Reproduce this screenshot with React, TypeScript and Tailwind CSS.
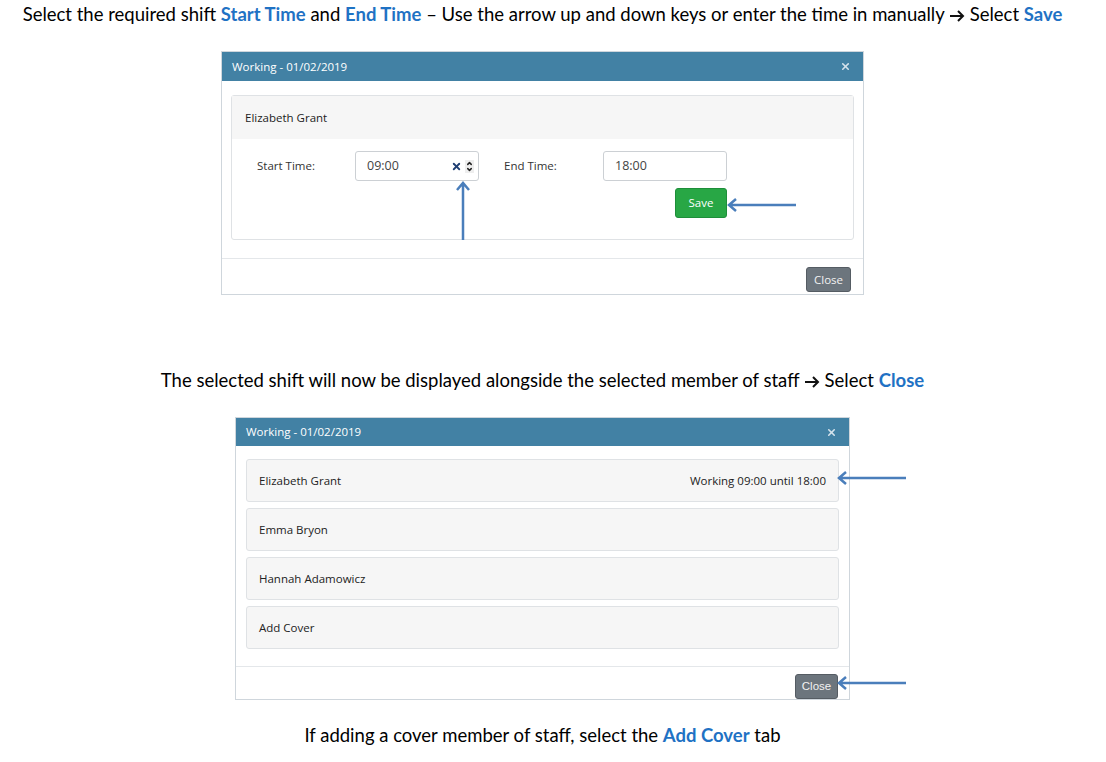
import { X, ChevronUp, ChevronDown } from 'lucide-react';

const doc = { fontFamily: 'Lato, "Liberation Sans", sans-serif' };
const ui = { fontFamily: '"Open Sans", "Noto Sans", sans-serif' };

function Arrow({ dir }: { dir: 'left' | 'up' }) {
  if (dir === 'up') {
    return (
      <svg width="14" height="60" viewBox="0 0 14 60" className="block">
        <path d="M7 59 V2 M1 9 L7 2 L13 9" stroke="#4a7ebb" strokeWidth="2.5" fill="none" strokeLinejoin="miter" />
      </svg>
    );
  }
  return (
    <svg width="70" height="14" viewBox="0 0 70 14" className="block">
      <path d="M69 7 H2 M9 1 L2 7 L9 13" stroke="#4a7ebb" strokeWidth="2.5" fill="none" />
    </svg>
  );
}

function Pointer() {
  return (
    <svg width="16" height="12" viewBox="0 0 16 12" className="inline-block align-[-1px]">
      <path d="M1 6 H14 M9 1 L14 6 L9 11" stroke="#111" strokeWidth="2" fill="none" />
    </svg>
  );
}

function ModalHeader() {
  return (
    <div className="flex items-center justify-between bg-[#4281a4] pl-[10px] pr-[12px] text-[11.5px] text-white">
      <span>Working - 01/02/2019</span>
      <X size={11} strokeWidth={3.5} className="text-[#d5e3ec]" />
    </div>
  );
}

function EditModal() {
  return (
    <div className="relative w-[643px] border border-[#cfd6dc] bg-white" style={ui}>
      <div className="h-[29px] flex flex-col justify-center bg-[#4281a4]">
        <ModalHeader />
      </div>
      <div className="px-[9px] pt-[14px] pb-[18px]">
        <div className="rounded-[3px] border border-[#dfe2e5]">
          <div className="h-[43px] flex items-center bg-[#f6f6f6] pl-[13px] text-[11.5px] text-[#222]">Elizabeth Grant</div>
          <div className="pt-[12px] pb-[21px]">
            <div className="flex items-center text-[11.5px] text-[#333]">
              <span className="pl-[25px] w-[123px]">Start Time:</span>
              <div className="flex h-[30px] w-[124px] items-center rounded-[3px] border border-[#ccd0d4] pl-[11px] pr-[4px] text-[12.5px] text-[#444]">
                <span className="flex-1">09:00</span>
                <X size={11} strokeWidth={4} className="text-[#1f3f73]" />
                <div className="ml-[3px] flex flex-col items-center bg-[#eee] px-[1px]">
                  <ChevronUp size={7} strokeWidth={5} className="text-[#222] -mb-[1px]" />
                  <ChevronDown size={7} strokeWidth={5} className="text-[#222]" />
                </div>
              </div>
              <span className="pl-[25px] w-[124px]">End Time:</span>
              <div className="flex h-[30px] w-[124px] items-center rounded-[3px] border border-[#ccd0d4] pl-[11px] text-[12.5px] text-[#444]">
                18:00
              </div>
            </div>
            <div className="flex pl-[443px] pt-[7px]">
              <button className="h-[30px] w-[52px] rounded-[3px] border border-[#1e8e3a] bg-[#28a745] text-[11.5px] text-white">Save</button>
            </div>
          </div>
        </div>
      </div>
      <div className="flex justify-end border-t border-[#e4e7ea] px-[12px] pt-[8px] pb-[2px]">
        <button className="h-[25px] w-[45px] rounded-[3px] border border-[#555c63] bg-[#6c757d] text-[11.5px] text-[#f2f2f2]">Close</button>
      </div>
      <div className="absolute left-[234px] top-[129px]">
        <Arrow dir="up" />
      </div>
      <div className="absolute left-[505px] top-[146px]">
        <Arrow dir="left" />
      </div>
    </div>
  );
}

function ListModal() {
  const rows = ['Elizabeth Grant', 'Emma Bryon', 'Hannah Adamowicz', 'Add Cover'];
  return (
    <div className="relative w-[615px] border border-[#cfd6dc] bg-white" style={ui}>
      <div className="h-[28px] flex flex-col justify-center bg-[#4281a4]">
        <ModalHeader />
      </div>
      <div className="flex flex-col gap-[6px] px-[10px] pt-[13px] pb-[17px]">
        {rows.map((r, i) => (
          <div key={r} className="flex h-[43px] items-center justify-between rounded-[3px] border border-[#dfe2e5] bg-[#f6f6f6] px-[12px] text-[11.5px] text-[#222]">
            <span>{r}</span>
            {i === 0 && <span>Working 09:00 until 18:00</span>}
          </div>
        ))}
      </div>
      <div className="flex justify-end border-t border-[#e4e7ea] px-[11px] pt-[7px] pb-[0px]">
        <button className="h-[25px] w-[43px] rounded-[3px] border border-[#555c63] bg-[#6c757d] text-[11.5px] text-[#f2f2f2]" style={{ fontFamily: '"Liberation Sans Narrow", "Liberation Sans", sans-serif' }}>Close</button>
      </div>
      <div className="absolute left-[601px] top-[53px]">
        <Arrow dir="left" />
      </div>
      <div className="absolute left-[601px] top-[258px]">
        <Arrow dir="left" />
      </div>
    </div>
  );
}

export default function App() {
  return (
    <div className="min-h-[762px] w-[1106px] bg-white text-black" style={doc}>
      <div className="flex w-[1085px] flex-col items-center">
        <p className="mt-[2px] h-[24px] text-[18.5px] leading-[24px] whitespace-nowrap">
          Select the required shift <b className="text-[#1f72c4]">Start Time</b> and <b className="text-[#1f72c4]">End Time</b> – Use the arrow up and down keys or enter the time in manually <Pointer /> Select <b className="text-[#1f72c4]">Save</b>
        </p>
        <div className="mt-[25px]">
          <EditModal />
        </div>
        <p className="mt-[73px] h-[24px] text-[18.5px] leading-[24px] whitespace-nowrap">
          The selected shift will now be displayed alongside the selected member of staff <Pointer /> Select <b className="text-[#1f72c4]">Close</b>
        </p>
        <div className="mt-[25px]">
          <ListModal />
        </div>
        <p className="mt-[23px] h-[24px] text-[18.5px] leading-[24px] whitespace-nowrap">
          If adding a cover member of staff, select the <b className="text-[#1f72c4]">Add Cover</b> tab
        </p>
      </div>
    </div>
  );
}
